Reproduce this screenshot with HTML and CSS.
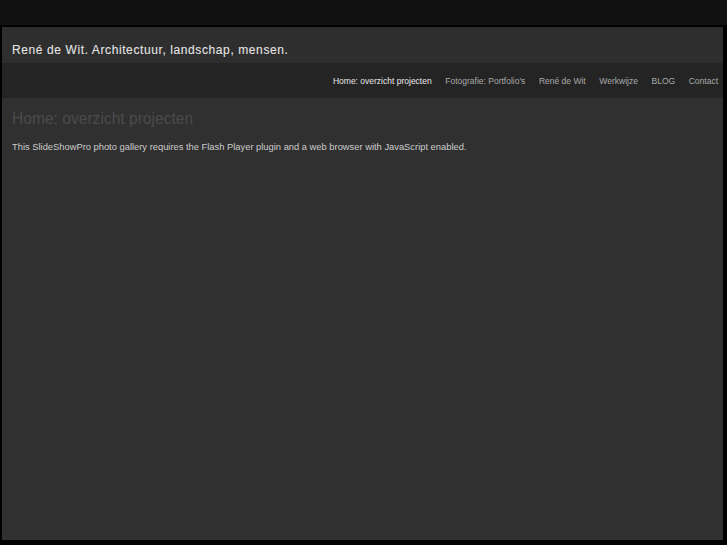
FILE: index.html
```html
<!DOCTYPE html>
<html lang="nl">
<head>
<meta charset="utf-8">
<title>René de Wit. Architectuur, landschap, mensen.</title>
<link rel="stylesheet" href="styles.css">
</head>
<body>
<div class="topstrip"></div>
<div class="page">
  <header class="site-header">
    <h1 class="site-title">René de Wit. Architectuur, landschap, mensen.</h1>
  </header>
  <nav class="site-nav">
    <a class="nav-item active" href="#">Home: overzicht projecten</a>
    <a class="nav-item" href="#">Fotografie: Portfolio's</a>
    <a class="nav-item" href="#">René de Wit</a>
    <a class="nav-item" href="#">Werkwijze</a>
    <a class="nav-item" href="#">BLOG</a>
    <a class="nav-item" href="#">Contact</a>
  </nav>
  <main class="content">
    <h2 class="page-title">Home: overzicht projecten</h2>
    <p class="notice">This SlideShowPro photo gallery requires the Flash Player plugin and a web browser with JavaScript enabled.</p>
  </main>
</div>
</body>
</html>
```
FILE: styles.css
```css
html, body {
  margin: 0;
  padding: 0;
}
body {
  background: #000;
  font-family: "Liberation Sans", Arial, sans-serif;
  width: 727px;
  height: 545px;
  overflow: hidden;
}
.topstrip {
  height: 25px;
  background: #111111;
}
.page {
  margin: 2px 4px 0 2px;
  height: 513px;
  display: flex;
  flex-direction: column;
  background: #303030;
}
.site-header {
  height: 36px;
  box-sizing: border-box;
  background: #2e2e2e;
  display: flex;
  align-items: center;
  padding: 9px 0 0 10px;
}
.site-title {
  margin: 0;
  font-size: 12px;
  font-weight: normal;
  letter-spacing: 0.6px;
  color: #e4e4e4;
  -webkit-text-stroke: 0.1px #e4e4e4;
}
.site-nav {
  height: 35px;
  background: #242424;
  display: flex;
  justify-content: flex-end;
  align-items: center;
  gap: 13.6px;
  padding-right: 5px;
}
.nav-item {
  font-size: 8.5px;
  color: #aaaaaa;
  text-decoration: none;
}
.nav-item.active {
  color: #e8e8e8;
}
.content {
  flex: 1;
  padding: 12px 10px 0 10px;
}
.page-title {
  margin: 0;
  font-size: 15.6px;
  font-weight: normal;
  color: #4b4b4b;
}
.notice {
  margin: 14px 0 0;
  font-size: 9.35px;
  color: #cccccc;
}
```
